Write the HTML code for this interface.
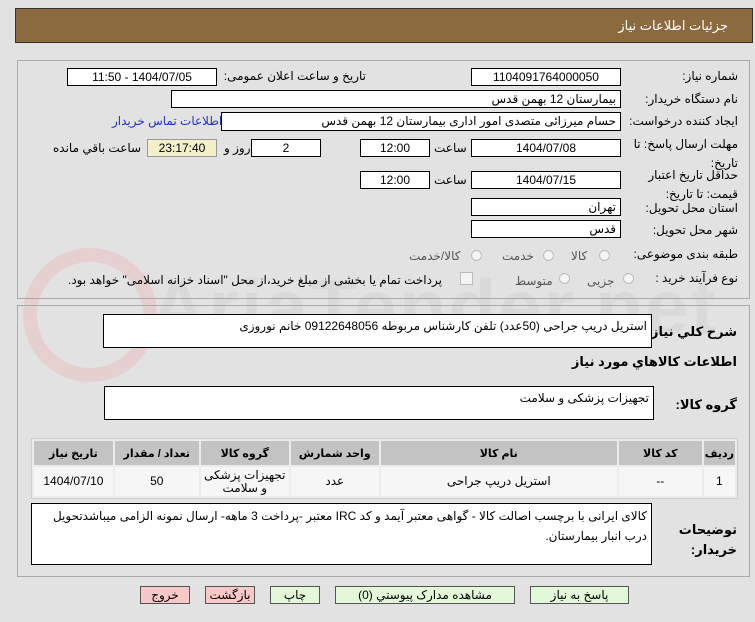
<!DOCTYPE html>
<html><head><meta charset="utf-8"><style>
body{margin:0;width:755px;height:622px;background:#e2e2e2;font-family:"Liberation Sans","DejaVu Sans",sans-serif;font-size:12px;color:#000;position:relative;overflow:hidden}
.a{position:absolute}
.box{position:absolute;background:#fff;border:1px solid #000;box-sizing:border-box;direction:rtl;padding:0 4px;line-height:16px;font-size:12px;white-space:nowrap;overflow:hidden}
.c{text-align:center}
.l{position:absolute;direction:rtl;white-space:nowrap;font-size:12px}
.panel{position:absolute;border:1px solid #aaa;box-sizing:border-box}
.radio{position:absolute;width:11px;height:11px;border-radius:50%;border:1px solid #bbb;background:#f4f4f4;box-sizing:border-box}
.btn{position:absolute;border:1px solid #555;box-sizing:border-box;text-align:center;line-height:16px;font-size:12px;direction:rtl}
table{border-collapse:separate;border-spacing:2px;position:absolute;left:31px;top:438px;width:707px;background:#ececec;border:1px solid #ccc;direction:rtl}
th{background:#c3c3c3;font-weight:bold;height:22px;font-size:11px}
td{background:#f6f6f6;text-align:center;height:27px;font-size:12px;line-height:13px}
</style></head><body>
<div class="a" style="left:15px;top:8px;width:738px;height:35px;background:#8b6a40;border:1px solid #333;box-sizing:border-box"></div>
<div class="l" style="right:27px;top:18px;color:#fff;font-size:13px">جزئیات اطلاعات نیاز</div>

<svg class="a" style="left:20px;top:240px" width="150" height="150"><circle cx="70" cy="75" r="60" fill="none" stroke="#e8c8c8" stroke-width="14" opacity=".7"/></svg>
<div class="a" style="left:150px;top:262px;font-size:78px;font-weight:bold;color:#d0d0d0;opacity:.45;letter-spacing:2px">AriaTender.net</div>

<div class="panel" style="left:17px;top:60px;width:733px;height:239px"></div>
<div class="l" style="right:17px;top:69px">شماره نیاز:</div>
<div class="box c" style="left:471px;top:68px;width:150px;height:18px">1104091764000050</div>
<div class="l" style="right:389px;top:69px">تاریخ و ساعت اعلان عمومی:</div>
<div class="box c" style="left:67px;top:68px;width:150px;height:18px">1404/07/05 - 11:50</div>

<div class="l" style="right:17px;top:92px">نام دستگاه خریدار:</div>
<div class="box" style="left:171px;top:90px;width:450px;height:18px">بیمارستان 12 بهمن قدس</div>

<div class="l" style="right:17px;top:114px">ایجاد کننده درخواست:</div>
<div class="box" style="left:221px;top:112px;width:400px;height:19px">حسام میرزائی متصدی امور اداری بیمارستان 12 بهمن قدس</div>
<div class="l" style="left:112px;top:114px;color:#2233cc">اطلاعات تماس خریدار</div>

<div class="l" style="right:17px;top:135px;line-height:19px;text-align:right">مهلت ارسال پاسخ: تا<br>تاریخ:</div>
<div class="box c" style="left:471px;top:139px;width:150px;height:18px">1404/07/08</div>
<div class="l" style="left:434px;top:141px">ساعت</div>
<div class="box c" style="left:360px;top:139px;width:70px;height:18px">12:00</div>
<div class="box c" style="left:251px;top:139px;width:70px;height:18px">2</div>
<div class="l" style="left:224px;top:141px">روز و</div>
<div class="box c" style="left:147px;top:139px;width:70px;height:18px;background:#f3f0c9;border-color:#999">23:17:40</div>
<div class="l" style="left:53px;top:141px">ساعت باقي مانده</div>

<div class="l" style="right:17px;top:166px;line-height:19px;text-align:right">حداقل تاریخ اعتبار<br>قیمت: تا تاریخ:</div>
<div class="box c" style="left:471px;top:171px;width:150px;height:18px">1404/07/15</div>
<div class="l" style="left:434px;top:173px">ساعت</div>
<div class="box c" style="left:360px;top:171px;width:70px;height:18px">12:00</div>

<div class="l" style="right:17px;top:201px">استان محل تحویل:</div>
<div class="box" style="left:471px;top:198px;width:150px;height:18px">تهران</div>
<div class="l" style="right:17px;top:223px">شهر محل تحویل:</div>
<div class="box" style="left:471px;top:220px;width:150px;height:18px">قدس</div>

<div class="l" style="right:17px;top:247px">طبقه بندی موضوعی:</div>
<div class="radio" style="left:599px;top:250px"></div><div class="l" style="left:571px;top:249px;color:#555">کالا</div>
<div class="radio" style="left:543px;top:250px"></div><div class="l" style="left:502px;top:249px;color:#555">خدمت</div>
<div class="radio" style="left:471px;top:250px"></div><div class="l" style="left:409px;top:249px;color:#555">کالا/خدمت</div>

<div class="l" style="right:17px;top:271px">نوع فرآیند خرید :</div>
<div class="radio" style="left:623px;top:273px"></div><div class="l" style="left:587px;top:274px;color:#555">جزیی</div>
<div class="radio" style="left:559px;top:273px"></div><div class="l" style="left:515px;top:274px;color:#555">متوسط</div>
<div class="a" style="left:460px;top:272px;width:11px;height:11px;border:1px solid #bbb;background:#f4f4f4"></div>
<div class="l" style="left:68px;top:273px">پرداخت تمام یا بخشی از مبلغ خرید،از محل "اسناد خزانه اسلامی" خواهد بود.</div>

<div class="panel" style="left:17px;top:305px;width:733px;height:272px"></div>
<div class="l" style="right:18px;top:324px;font-weight:bold;font-size:13px">شرح كلي نياز:</div>
<div class="box" style="left:103px;top:314px;width:549px;height:34px;line-height:22px">استریل دریپ جراحی (50عدد) تلفن کارشناس مربوطه 09122648056 خانم نوروزی</div>
<div class="l" style="right:18px;top:354px;font-weight:bold;font-size:13px">اطلاعات كالاهاي مورد نياز</div>
<div class="l" style="right:18px;top:397px;font-weight:bold;font-size:13px">گروه کالا:</div>
<div class="box" style="left:104px;top:386px;width:550px;height:34px;line-height:22px">تجهیزات پزشکی و سلامت</div>

<table>
<tr><th style="width:25px">رديف</th><th style="width:81px">کد کالا</th><th style="width:234px">نام کالا</th><th style="width:86px">واحد شمارش</th><th style="width:86px">گروه کالا</th><th style="width:82px">تعداد / مقدار</th><th>تاریخ نیاز</th></tr>
<tr><td>1</td><td>--</td><td>استریل دریپ جراحی</td><td>عدد</td><td>تجهیزات پزشکی و سلامت</td><td>50</td><td>1404/07/10</td></tr>
</table>

<div class="l" style="right:18px;top:520px;line-height:20px;font-weight:bold;font-size:13px;text-align:right">توضیحات<br>خریدار:</div>
<div class="box" style="left:31px;top:503px;width:621px;height:62px;line-height:20px;padding-top:2px;white-space:normal">کالای ایرانی با برچسب اصالت کالا  - گواهی معتبر آیمد و کد IRC معتبر -پرداخت 3 ماهه- ارسال نمونه الزامی میباشدتحویل درب انبار بیمارستان.</div>

<div class="btn" style="left:140px;top:586px;width:50px;height:18px;background:#f7c8c8">خروج</div>
<div class="btn" style="left:205px;top:586px;width:50px;height:18px;background:#f7c8c8">بازگشت</div>
<div class="btn" style="left:270px;top:586px;width:50px;height:18px;background:#e2f8d8">چاپ</div>
<div class="btn" style="left:335px;top:586px;width:180px;height:18px;background:#e2f8d8">مشاهده مدارک پیوستي (0)</div>
<div class="btn" style="left:530px;top:586px;width:99px;height:18px;background:#e2f8d8">پاسخ به نیاز</div>
</body></html>
